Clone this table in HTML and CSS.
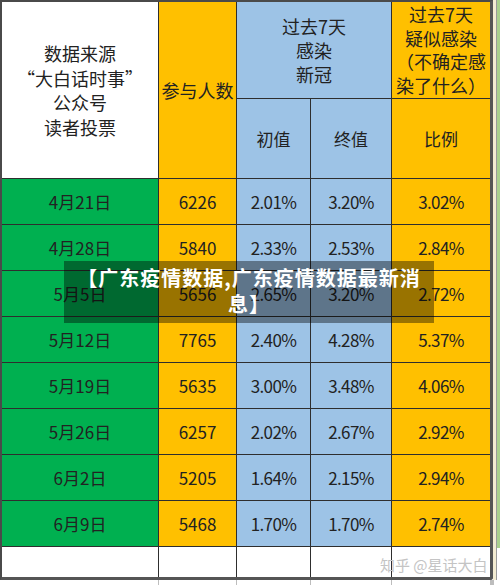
FILE: index.html
```html
<!DOCTYPE html>
<html lang="zh-CN">
<head>
<meta charset="utf-8">
<title>广东疫情数据</title>
<link rel="stylesheet" href="styles.css">
</head>
<body>
<div class="page">
  <div class="sheet">
    <div class="frame">
      <div class="grid">
        <div class="cell white src">数据来源<br>“大白话时事”<br>公众号<br>读者投票</div>
        <div class="cell yellow part">参与人数</div>
        <div class="cell blue inf">过去7天<br>感染<br>新冠</div>
        <div class="cell yellow sus">过去7天<br>疑似感染<br>（不确定感<br>染了什么）</div>
        <div class="cell blue">初值</div>
        <div class="cell blue">终值</div>
        <div class="cell yellow">比例</div>

        <div class="cell green">4月21日</div><div class="cell yellow">6226</div><div class="cell blue pct">2.01%</div><div class="cell blue pct">3.20%</div><div class="cell yellow pct">3.02%</div>
        <div class="cell green">4月28日</div><div class="cell yellow">5840</div><div class="cell blue pct">2.33%</div><div class="cell blue pct">2.53%</div><div class="cell yellow pct">2.84%</div>
        <div class="cell green">5月5日</div><div class="cell yellow">5656</div><div class="cell blue pct">2.65%</div><div class="cell blue pct">3.20%</div><div class="cell yellow pct">2.72%</div>
        <div class="cell green">5月12日</div><div class="cell yellow">7765</div><div class="cell blue pct">2.40%</div><div class="cell blue pct">4.28%</div><div class="cell yellow pct">5.37%</div>
        <div class="cell green">5月19日</div><div class="cell yellow">5635</div><div class="cell blue pct">3.00%</div><div class="cell blue pct">3.48%</div><div class="cell yellow pct">4.06%</div>
        <div class="cell green">5月26日</div><div class="cell yellow">6257</div><div class="cell blue pct">2.02%</div><div class="cell blue pct">2.67%</div><div class="cell yellow pct">2.92%</div>
        <div class="cell green">6月2日</div><div class="cell yellow">5205</div><div class="cell blue pct">1.64%</div><div class="cell blue pct">2.15%</div><div class="cell yellow pct">2.94%</div>
        <div class="cell green">6月9日</div><div class="cell yellow">5468</div><div class="cell blue pct">1.70%</div><div class="cell blue pct">1.70%</div><div class="cell yellow pct">2.74%</div>

        <div class="cell white"></div><div class="cell white"></div><div class="cell white"></div><div class="cell white"></div><div class="cell white"></div>
      </div>
    </div>
    <div class="side">
      <div class="side-pale"></div>
      <div class="side-line"></div>
      <div class="side-green"></div>
    </div>
  </div>
  <div class="under">
    <div class="ucell"></div><div class="ucell"></div><div class="ucell"></div><div class="ucell"></div><div class="ucell"></div>
  </div>
  <div class="banner">【广东疫情数据,广东疫情数据最新消息】</div>
  <div class="watermark">知乎 @星话大白</div>
</div>
</body>
</html>
```
FILE: styles.css
```css
* { box-sizing: border-box; }
html, body { margin: 0; padding: 0; background: #fff; }
.page {
  position: relative;
  width: 500px;
  height: 585px;
  overflow: hidden;
  font-family: "Noto Sans CJK SC", "Noto Sans", sans-serif;
  color: #222;
}
.sheet { display: flex; height: 580px; }
.frame {
  width: 493px;
  height: 580px;
  border-left: 2px solid #4a4a4a;
  border-top: 2px solid #4a4a4a;
  border-right: 3px solid #555;
  border-bottom: 3px solid #555;
  border-bottom-right-radius: 3px;
}
.grid {
  display: grid;
  grid-template-columns: 156px 77px 73px 80px 98px;
  grid-template-rows: 96px 79px repeat(8, 45px) 30px;
  gap: 1px;
  background: #2e2e2e;
}
.cell {
  display: flex;
  align-items: center;
  justify-content: center;
  text-align: center;
  font-size: 17px;
  line-height: 24px;
  white-space: nowrap;
}
.pct { letter-spacing: -0.6px; }
.src, .part, .inf, .sus { font-size: 18px; }
.src { grid-row: 1 / 3; line-height: 24.5px; }
.part { grid-row: 1 / 3; }
.inf { grid-column: 3 / 5; }
.sus { line-height: 23.5px; }
.white { background: #fff; }
.yellow { background: #ffc000; }
.blue { background: #9dc3e6; }
.green { background: #00b050; }
.side { display: flex; height: 580px; }
.side-pale { width: 3px; background: #f3ecd2; }
.side-line { width: 1px; background: #9a9a9a; }
.side-green { width: 3px; height: 548px; background: #a9d08e; }
.under {
  display: grid;
  grid-template-columns: 156px 77px 73px 80px 98px;
  gap: 1px;
  height: 5px;
  margin-left: 2px;
  background: #bdbdbd;
  width: 492px;
}
.ucell { background: #fff; }
.banner {
  position: absolute;
  left: 64px;
  top: 261px;
  width: 370px;
  height: 62px;
  padding: 4px 10px;
  background: rgba(0, 0, 0, 0.4);
  color: #fff;
  font-weight: 700;
  font-size: 20px;
  line-height: 26px;
  letter-spacing: 1px;
  text-align: center;
}
.watermark {
  position: absolute;
  left: 380px;
  top: 555px;
  font-size: 15px;
  line-height: 20px;
  color: #c4c4c4;
  white-space: nowrap;
}
```
